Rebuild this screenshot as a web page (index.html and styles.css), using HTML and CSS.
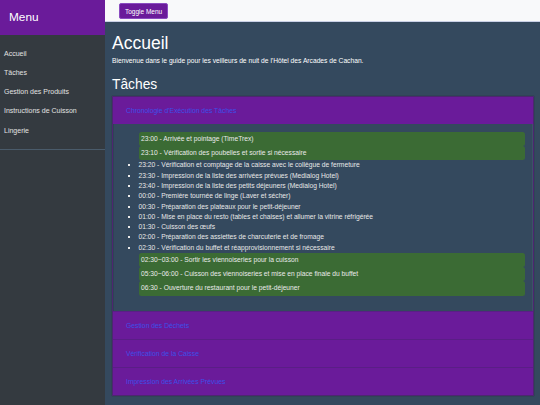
FILE: index.html
```html
<!DOCTYPE html>
<html lang="fr">
<head>
<meta charset="utf-8">
<title>Guide des veilleurs de nuit</title>
<link rel="stylesheet" href="styles.css">
</head>
<body>
<div class="layout">
  <aside class="sidebar">
    <div class="sidebar-header">Menu</div>
    <nav class="nav">
      <a class="nav-item" href="#">Accueil</a>
      <a class="nav-item" href="#">Tâches</a>
      <a class="nav-item" href="#">Gestion des Produits</a>
      <a class="nav-item" href="#">Instructions de Cuisson</a>
      <a class="nav-item" href="#">Lingerie</a>
    </nav>
  </aside>
  <div class="main">
    <div class="topbar"><button class="toggle">Toggle Menu</button></div>
    <div class="content">
      <h1 class="title">Accueil</h1>
      <p class="intro">Bienvenue dans le guide pour les veilleurs de nuit de l'Hôtel des Arcades de Cachan.</p>
      <h2 class="subtitle">Tâches</h2>
      <div class="accordion">
        <div class="acc-item">
          <div class="acc-header"><a href="#">Chronologie d'Exécution des Tâches</a></div>
          <div class="acc-body">
            <ul class="tasks">
              <li class="hl">23:00 - Arrivée et pointage (TimeTrex)</li>
              <li class="hl">23:10 - Vérification des poubelles et sortie si nécessaire</li>
              <li>23:20 - Vérification et comptage de la caisse avec le collègue de fermeture</li>
              <li>23:30 - Impression de la liste des arrivées prévues (Medialog Hotel)</li>
              <li>23:40 - Impression de la liste des petits déjeuners (Medialog Hotel)</li>
              <li>00:00 - Première tournée de linge (Laver et sécher)</li>
              <li>00:30 - Préparation des plateaux pour le petit-déjeuner</li>
              <li>01:00 - Mise en place du resto (tables et chaises) et allumer la vitrine réfrigérée</li>
              <li>01:30 - Cuisson des œufs</li>
              <li>02:00 - Préparation des assiettes de charcuterie et de fromage</li>
              <li>02:30 - Vérification du buffet et réapprovisionnement si nécessaire</li>
              <li class="hl">02:30~03:00 - Sortir les viennoiseries pour la cuisson</li>
              <li class="hl">05:30~06:00 - Cuisson des viennoiseries et mise en place finale du buffet</li>
              <li class="hl">06:30 - Ouverture du restaurant pour le petit-déjeuner</li>
            </ul>
          </div>
        </div>
        <div class="acc-item"><div class="acc-header"><a href="#">Gestion des Déchets</a></div></div>
        <div class="acc-item"><div class="acc-header"><a href="#">Vérification de la Caisse</a></div></div>
        <div class="acc-item"><div class="acc-header"><a href="#">Impression des Arrivées Prévues</a></div></div>
      </div>
    </div>
  </div>
</div>
</body>
</html>
```

FILE: styles.css
```css
html, body {
  margin: 0;
  padding: 0;
  height: 100%;
}
body {
  font-family: "Liberation Sans", Arial, sans-serif;
  background: #34495e;
}
.layout {
  display: flex;
  min-height: 100%;
}
.sidebar {
  width: 105px;
  flex: none;
  background: #343a40;
  color: #e6e6e6;
}
.sidebar-header {
  height: 35px;
  box-sizing: border-box;
  background: #6a1b9a;
  color: #fff;
  font-size: 11.8px;
  padding: 10px 9px 0;
  line-height: 14px;
}
.nav {
  display: flex;
  flex-direction: column;
  padding: 8.5px 0 9.5px;
  border-bottom: 1px solid #4a5b6b;
}
.nav-item {
  display: block;
  color: #e2e2e2;
  text-decoration: none;
  font-size: 7px;
  line-height: 9.3px;
  padding: 5px 4px;
}
.main {
  flex: 1;
  display: flex;
  flex-direction: column;
  background: #34495e;
}
.topbar {
  height: 22px;
  box-sizing: border-box;
  background: #f8f9fa;
  border-bottom: 1px solid #c9d0e6;
  padding: 3px 14px 0;
}
.toggle {
  display: block;
  height: 16px;
  box-sizing: border-box;
  background: #6a1b9a;
  color: #fff;
  border: 1px solid #8a4cc0;
  border-radius: 2px;
  font-family: "Liberation Sans", Arial, sans-serif;
  font-size: 6.5px;
  padding: 0 5px;
  margin: 0;
}
.content {
  padding: 0 6.5px 12px 7px;
  color: #f1f1f1;
}
.title {
  font-size: 17.5px;
  font-weight: normal;
  margin: 11px 0 0;
  line-height: 20px;
  color: #fff;
}
.intro {
  font-size: 6.7px;
  line-height: 7.5px;
  margin: 3.5px 0 0;
  color: #fff;
}
.subtitle {
  font-size: 13.8px;
  font-weight: normal;
  line-height: 16px;
  margin: 12.5px 0 3.5px;
  color: #fff;
}
.accordion {
  border: 1px solid #4d2670;
  box-shadow: 0 0 1px rgba(0,0,0,0.4);
}
.acc-item + .acc-item {
  border-top: 1px solid #5a1e86;
}
.acc-header {
  background: #6a1b9a;
  height: 27px;
  display: flex;
  align-items: center;
  padding-left: 13px;
}
.acc-header a {
  color: #3d50e8;
  text-decoration: none;
  font-size: 6.8px;
}
.acc-body {
  background: #34495e;
  padding: 8px 7px 15px 8px;
  border-left: 1px solid #2f4256;
  border-right: 1px solid #3e5268;
}
.tasks {
  margin: 0;
  padding-left: 16.5px;
  font-size: 6.7px;
  line-height: 10.3px;
  color: #e8e8e8;
}
.tasks li {
  list-style: square;
}
.tasks li.hl {
  list-style: none;
  background: #3b6b34;
  border-radius: 2.5px;
  line-height: 14.2px;
  padding-left: 2.5px;
  color: #eaeaea;
}
```
